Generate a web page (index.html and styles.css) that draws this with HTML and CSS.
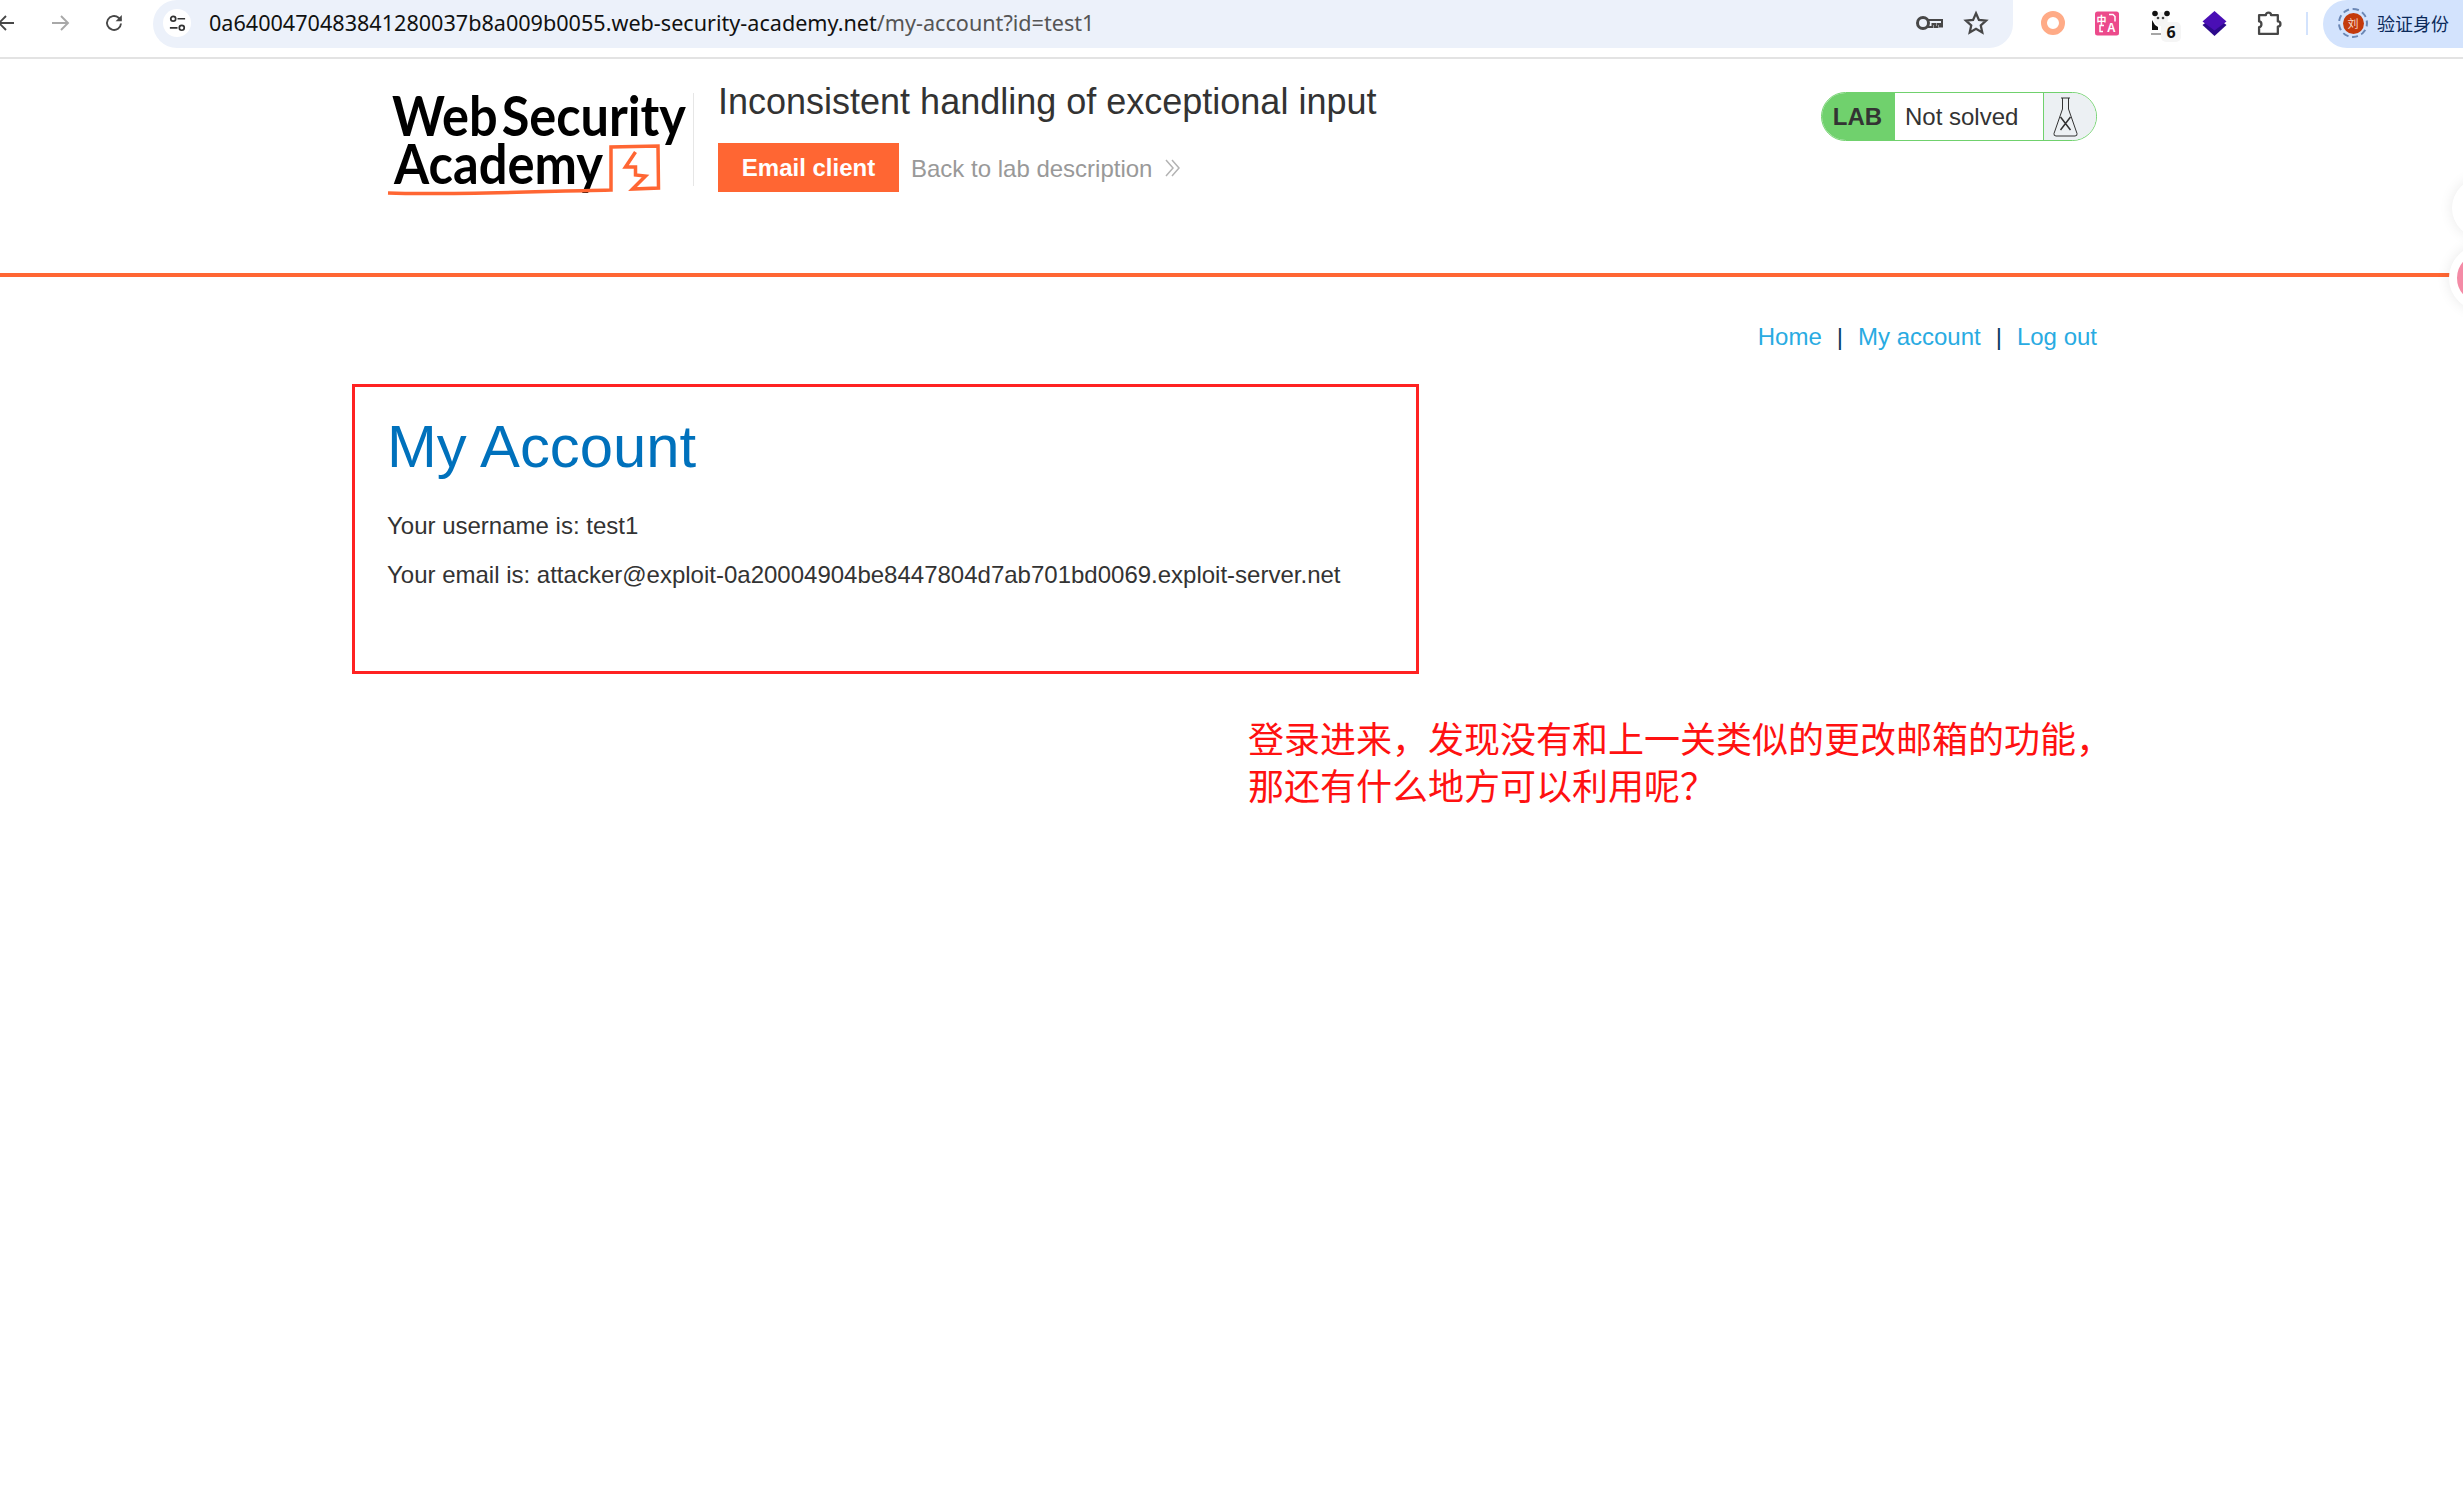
FILE: index.html
```html
<!DOCTYPE html>
<html lang="en">
<head>
<meta charset="utf-8">
<title>Inconsistent handling of exceptional input</title>
<link rel="stylesheet" href="styles.css">
</head>
<body>
<header class="toolbar">
  <div class="nav-buttons">
    <svg class="tb-icon back" viewBox="0 0 20 20"><path d="M18 10H3M10 3l-7 7 7 7" fill="none" stroke="#474747" stroke-width="1.9"/></svg>
    <svg class="tb-icon forward" viewBox="0 0 20 20"><path d="M1 10h16M10 3l7 7-7 7" fill="none" stroke="#a8a8a8" stroke-width="1.9"/></svg>
    <svg class="tb-icon reload" viewBox="0 0 20 20"><path d="M17 10.5A7 7 0 1 1 14.6 4.7L17 7" fill="none" stroke="#474747" stroke-width="1.9"/><path d="M17.8 2v6.2h-6.2z" fill="#474747"/></svg>
  </div>
  <div class="omnibox">
    <span class="site-info">
      <svg viewBox="0 0 20 20" class="tune"><circle cx="5.5" cy="5" r="2.6" fill="none" stroke="#333" stroke-width="1.8"/><path d="M10 5h8M2 14.5h8" stroke="#333" stroke-width="1.8"/><circle cx="14.5" cy="14.5" r="2.6" fill="none" stroke="#333" stroke-width="1.8"/></svg>
    </span>
    <span class="url"><span class="url-host">0a6400470483841280037b8a009b0055.web-security-academy.net</span><span class="url-path">/my-account?id=test1</span></span>
    <span class="omni-actions">
      <svg class="key" viewBox="0 0 28 20"><circle cx="8" cy="10" r="5.5" fill="none" stroke="#474747" stroke-width="3"/><path d="M13 7h14v6.500h-2v-2.500h-2.500v3h-2.500v-3h-2.500v3H13z" fill="none" stroke="#474747" stroke-width="2"/></svg>
      <svg class="star" viewBox="0 0 24 24"><path d="M12 3l2.700 6.100 6.600.7-4.900 4.400 1.400 6.500L12 17.400l-5.800 3.300 1.400-6.500-4.900-4.400 6.600-.7z" fill="none" stroke="#474747" stroke-width="2.100" stroke-linejoin="miter"/></svg>
    </span>
  </div>
  <div class="extensions">
    <span class="ext-ring"></span>
    <svg class="ext-translate" viewBox="0 0 24 24"><rect width="24" height="24" rx="2.500" fill="#ec4a8b"/><text x="1.500" y="12" class="ext-zh">中</text><text x="12" y="20.500" class="ext-a">A</text><path d="M14 3h4l2 2v5M9 14H5v6h3" fill="none" stroke="#fff" stroke-width="1.500"/></svg>
    <span class="ext-panda">
      <svg viewBox="0 0 20 26"><circle cx="11" cy="9" r="7" fill="#f4f4f4"/><circle cx="5" cy="3.500" r="2.800" fill="#111"/><circle cx="17" cy="3.500" r="2.800" fill="#111"/><circle cx="8" cy="8" r="1.300" fill="#444"/><circle cx="13" cy="8" r="1.300" fill="#444"/><path d="M2 10v10h6v-3l-3-2z" fill="#111"/><path d="M1 24h16" stroke="#888" stroke-width="1.500"/></svg>
      <span class="ext-badge">6</span>
    </span>
    <svg class="ext-diamond" viewBox="0 0 25 25"><path d="M12.500 5l12 9-12 11L.5 14z" fill="#2d0a8c"/><path d="M12.500 0l12 10.500-12 9-12-9z" fill="#4a0fb5"/></svg>
    <svg class="ext-puzzle" viewBox="0 0 24 24"><path d="M2 4h6.500a2.500 2.500 0 0 1 5 0H20v6a2.500 2.500 0 0 1 0 5v7H2v-6.500c3 0 3-5.500 0-5.500z" fill="none" stroke="#474747" stroke-width="2.200" stroke-linejoin="round"/></svg>
    <span class="tb-sep"></span>
  </div>
  <div class="profile">
    <span class="avatar-ring"><span class="avatar">刘</span></span>
    <span class="profile-label">验证身份</span>
  </div>
</header>

<section class="lab-header">
  <svg class="logo" viewBox="0 0 305 112" role="img" aria-label="Web Security Academy">
    <text x="7" y="46" class="logo-text logo-line1" textLength="294" lengthAdjust="spacingAndGlyphs">Web Security</text>
    <text x="9" y="94" class="logo-text" textLength="209" lengthAdjust="spacingAndGlyphs">Academy</text>
    <path d="M3 103c60 2 130-1 223-3V57l47-1 .5 42-26 1 13-13-10-1V77l-10 0 10-15" fill="none" stroke="#ff6633" stroke-width="3.500"/>
  </svg>
  <span class="logo-sep"></span>
  <div class="lab-title-col">
    <h2 class="lab-title">Inconsistent handling of exceptional input</h2>
    <div class="lab-links">
      <a class="btn-email">Email client</a>
      <a class="back-link">Back to lab description</a>
      <svg class="chevrons" viewBox="0 0 18 20"><path d="M2 2l7 8-7 8M8 2l7 8-7 8" fill="none" stroke="#b3b3b3" stroke-width="1.500"/></svg>
    </div>
  </div>
  <div class="lab-status">
    <span class="status-lab">LAB</span>
    <span class="status-text">Not solved</span>
    <span class="status-icon">
      <svg viewBox="0 0 25 40" class="flask"><path d="M8 1h9M9.500 1v11L1 36.500q-.5 2.500 2 2.500h19q2.500 0 2-2.500L15.500 12V1" fill="none" stroke="#333" stroke-width="1"/><path d="M7.500 20l10 13M17.500 20l-10 13" stroke="#333" stroke-width="1.500"/></svg>
    </span>
  </div>
</section>

<main class="page">
  <nav class="top-links">
    <a>Home</a><span class="pipe">|</span><a>My account</a><span class="pipe">|</span><a>Log out</a>
  </nav>
  <section class="account-box">
    <h1>My Account</h1>
    <p>Your username is: test1</p>
    <p>Your email is: attacker@exploit-0a20004904be8447804d7ab701bd0069.exploit-server.net</p>
  </section>
  <p class="note">登录进来，发现没有和上一关类似的更改邮箱的功能，<br>那还有什么地方可以利用呢？</p>
</main>

<span class="float-btn float-white"></span>
<span class="float-btn float-pink"></span>
</body>
</html>
```
FILE: styles.css
```css
html, body { margin: 0; height: 100%; overflow: hidden; background: #fff; }
body { font-family: "Liberation Sans", Arial, sans-serif; color: #333; position: relative; }
h1, h2, p { margin: 0; }

.toolbar { display: flex; align-items: flex-start; height: 57px; border-bottom: 2px solid #e3e3e3; background: #fff; }
.nav-buttons { display: flex; align-items: center; height: 46px; width: 153px; flex: none; }
.tb-icon { width: 20px; height: 20px; flex: none; }
.back { margin-left: -4px; }
.forward { margin-left: 35px; }
.reload { margin-left: 33px; }
.omnibox { display: flex; align-items: center; width: 1860px; height: 48px; box-sizing: border-box; padding-bottom: 2px; flex: none; background: #ecf1fa; border-radius: 24px; border-top-right-radius: 0; border-top-left-radius: 24px; }
.site-info { display: flex; align-items: center; justify-content: center; width: 28px; height: 28px; margin-left: 10px; background: #fff; border-radius: 50%; flex: none; }
.tune { width: 19px; height: 19px; }
.url { margin-left: 18px; margin-top: -2px; font-family: "Noto Sans", sans-serif; font-size: 21.6px; white-space: nowrap; }
.url-host { color: #111; }
.url-path { color: #555; }
.omni-actions { margin-left: auto; display: flex; align-items: center; gap: 20px; padding-right: 24px; }
.key { width: 28px; height: 20px; }
.star { width: 26px; height: 26px; }

.extensions { display: flex; align-items: center; height: 46px; flex: none; padding-left: 28px; }
.ext-ring { width: 12px; height: 12px; border: 6.500px solid #ffab87; border-radius: 50%; flex: none; }
.ext-translate { width: 24px; height: 25px; margin-left: 30px; }
.ext-zh { font: 700 10px "Noto Sans CJK SC", sans-serif; fill: #fff; }
.ext-a { font: 700 12px "Liberation Sans", sans-serif; fill: #fff; }
.ext-panda { position: relative; width: 20px; height: 26px; margin-left: 31px; display: block; }
.ext-panda svg { width: 20px; height: 26px; display: block; }
.ext-badge { position: absolute; left: 11px; top: 12px; width: 20px; height: 20px; background: #f5f5f5; border-radius: 5px; font: 700 16px/20px "Open Sans", sans-serif; text-align: center; color: #111; }
.ext-diamond { width: 25px; height: 25px; margin-left: 32px; }
.ext-puzzle { width: 25px; height: 25px; margin-left: 30px; }
.tb-sep { width: 2px; height: 23px; background: #d3e3fd; margin-left: 24px; }

.profile { display: flex; align-items: center; height: 48px; box-sizing: border-box; padding-bottom: 2px; width: 170px; flex: none; margin-left: 15px; background: #d3e3fd; border-radius: 24px 0 0 24px; }
.avatar-ring { display: flex; align-items: center; justify-content: center; width: 26px; height: 26px; margin-left: 15px; border: 2px dashed #6b87b5; border-radius: 50%; flex: none; }
.avatar { width: 21px; height: 21px; border-radius: 50%; background: #c43a0c; color: #f5d9c8; font: 11px/21px "Noto Sans CJK SC", sans-serif; text-align: center; }
.profile-label { margin-left: 9px; font: 18px "Noto Sans CJK SC", sans-serif; color: #0b2a5a; white-space: nowrap; }

.lab-header { display: flex; align-items: flex-start; height: 214px; box-sizing: content-box; padding: 0 366px 0 385px; border-bottom: 4px solid #ff6633; }
.logo { width: 305px; height: 112px; margin-top: 31px; flex: none; overflow: visible; }
.logo-text { font: 700 56px Lato, sans-serif; fill: #000; }
.logo-line1 { word-spacing: -9px; }
.logo-sep { width: 1px; height: 93px; background: #e6e6e6; margin: 34px 24px 0 3px; flex: none; }
.lab-title-col { display: flex; flex-direction: column; flex: none; }
.lab-title { font-size: 36px; line-height: 42px; font-weight: 400; color: #333; margin-top: 22px; white-space: nowrap; }
.lab-links { display: flex; align-items: center; height: 49px; margin-top: 20px; }
.btn-email { display: flex; align-items: center; justify-content: center; width: 181px; height: 49px; box-sizing: border-box; padding-top: 1px; background: #ff6633; color: #fff; font-size: 24px; font-weight: 700; }
.back-link { margin-left: 12px; font-size: 24px; color: #999; white-space: nowrap; padding-top: 2px; }
.chevrons { width: 18px; height: 20px; margin-left: 12px; }

.lab-status { display: flex; margin-left: auto; margin-top: 33px; width: 276px; height: 49px; box-sizing: border-box; border: 1px solid #70d16d; border-radius: 25px; overflow: hidden; align-items: stretch; }
.status-lab { display: flex; align-items: center; justify-content: center; width: 73px; box-sizing: border-box; padding-right: 2px; background: #70d16d; font-size: 24px; font-weight: 700; color: #333; flex: none; }
.status-text { display: flex; align-items: center; width: 149px; padding-left: 10px; box-sizing: border-box; font-size: 24px; color: #333; flex: none; border-right: 1px solid #70d16d; }
.status-icon { flex: 1; display: flex; align-items: center; justify-content: center; background: #ecf0f3; padding-right: 10px; }
.flask { width: 25px; height: 40px; }

.page { padding: 0 366px 0 352px; }
.top-links { display: flex; justify-content: flex-end; align-items: center; height: 28px; margin-top: 46px; font-size: 24px; color: #29abe2; }
.pipe { color: #0a3d62; margin: 0 15px; }
.account-box { width: 1067px; height: 290px; box-sizing: border-box; margin-top: 33px; border: 3px solid #f22; padding: 26px 32px 0; }
.account-box h1 { font-size: 59.8px; line-height: 68px; font-weight: 400; color: #0071bc; }
.account-box p { font-size: 24px; line-height: 28px; color: #333; margin-top: 21px; white-space: nowrap; }
.account-box h1 + p { margin-top: 31px; }
.note { margin: 40px 0 0 896px; font: 36px/47px "Noto Sans CJK SC", sans-serif; color: #f11; white-space: nowrap; }

.float-btn { position: absolute; border-radius: 50%; background: #fff; box-shadow: 0 0 14px rgba(0,0,0,.09); }
.float-white { left: 2452px; top: 178px; width: 60px; height: 60px; }
.float-pink { left: 2449px; top: 245px; width: 66px; height: 66px; box-sizing: border-box; border: 8px solid #fff; background: #f48ba6; }
```
